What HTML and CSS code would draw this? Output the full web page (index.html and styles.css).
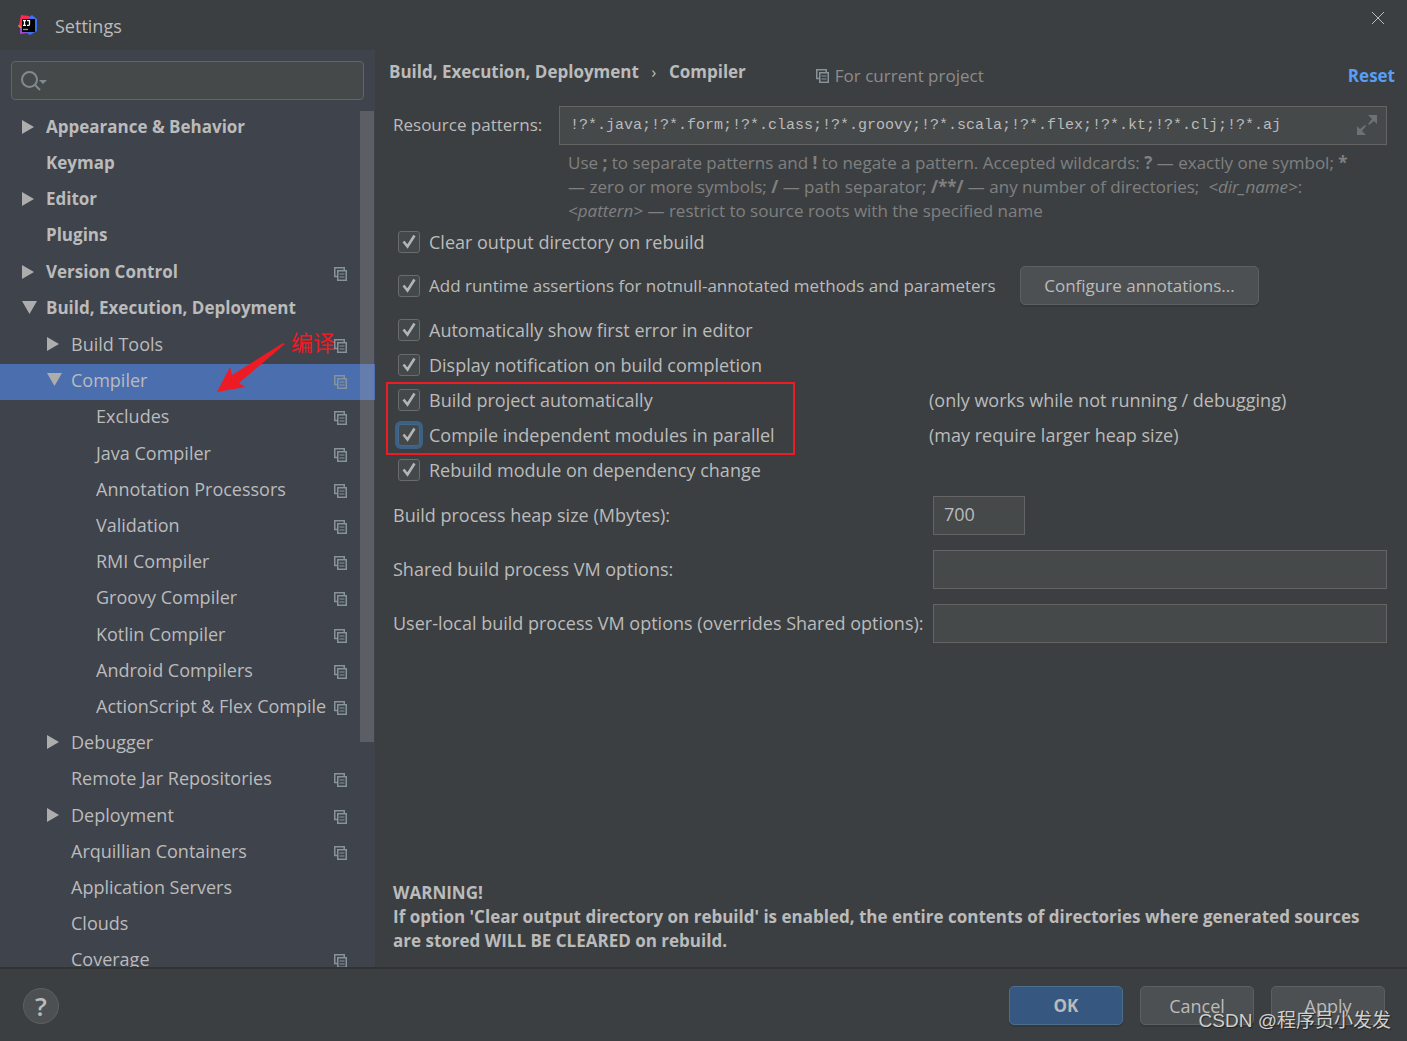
FILE: index.html
```html
<!DOCTYPE html>
<html lang="en">
<head>
<meta charset="utf-8">
<title>Settings</title>
<link rel="stylesheet" href="styles.css">
</head>
<body>
<svg class="sprite" aria-hidden="true">
  <symbol id="copy" viewBox="0 0 14 14"><path d="M3 9.500H.750V.750h9.500V3" stroke-width="1.500"/><rect x="3.750" y="3.750" width="8.500" height="9.500" stroke-width="1.500"/><path d="M5.500 7h5M5.500 10h5" stroke-width="1.200"/></symbol>
  <symbol id="right" viewBox="0 0 14 14"><path d="M1 0l12 7-12 7z"/></symbol>
  <symbol id="down" viewBox="0 0 16 14"><path d="M0 0h15L7.500 13z"/></symbol>
</svg>
<div class="window">
  <header class="titlebar">
    <svg class="logo" viewBox="0 0 20 20" aria-hidden="true">
      <path fill="#fc801d" d="M3 7L0 11l4 4z"/>
      <path fill="#fe2857" d="M3 0l8 1 2 3-7 9-5-3 1-5z"/>
      <path fill="#3b6ff5" d="M11 2l3-2 5 4v12l-7 4-5-3z"/>
      <path fill="#9b4bd6" d="M2 13l0 6 7-1 2-4z"/>
      <path fill="#000" d="M4 4h13v13H4z"/>
      <path fill="none" stroke="#fff" stroke-width="1.300" d="M5 5.700h3M6.500 5.500v5M5 10.300h3M9 5.700h2.500v3.500q0 1.200-1.200 1.200H9"/>
      <path fill="none" stroke="#999" stroke-width="1.300" d="M5 14.500h5"/>
    </svg>
    <h1 class="title">Settings</h1>
    <button class="close" type="button" aria-label="Close"><svg viewBox="0 0 14 14"><path d="M1 1l12 12M13 1L1 13"/></svg></button>
  </header>

  <div class="body">
    <nav class="sidebar" aria-label="Settings categories">
      <div class="search">
        <svg class="search-icon" viewBox="0 0 26 20" aria-hidden="true"><circle cx="8.500" cy="8.500" r="7.500"/><path d="M14 14l5 5"/><path class="fill" d="M18 9h8l-4 4z"/></svg>
        <input class="search-input" type="text" aria-label="Search settings">
      </div>
      <div class="tree-area">
        <ul class="tree">
          <li class="item top"><svg class="arrow"><use href="#right"/></svg><span class="name">Appearance &amp; Behavior</span></li>
          <li class="item top"><span class="name">Keymap</span></li>
          <li class="item top"><svg class="arrow"><use href="#right"/></svg><span class="name">Editor</span></li>
          <li class="item top"><span class="name">Plugins</span></li>
          <li class="item top"><svg class="arrow"><use href="#right"/></svg><span class="name">Version Control</span><svg class="copy"><use href="#copy"/></svg></li>
          <li class="item top"><svg class="arrow open"><use href="#down"/></svg><span class="name">Build, Execution, Deployment</span></li>
          <li class="item mid"><svg class="arrow"><use href="#right"/></svg><span class="name">Build Tools</span><svg class="copy"><use href="#copy"/></svg></li>
          <li class="item mid selected"><svg class="arrow open"><use href="#down"/></svg><span class="name">Compiler</span><svg class="copy"><use href="#copy"/></svg>
            <span class="note">编译</span>
            <svg class="pointer" viewBox="0 0 68 50" aria-hidden="true"><path d="M66 0L68 1L22 40L28 44L0 49L13 24L15 32Z"/></svg>
          </li>
          <li class="item leaf"><span class="name">Excludes</span><svg class="copy"><use href="#copy"/></svg></li>
          <li class="item leaf"><span class="name">Java Compiler</span><svg class="copy"><use href="#copy"/></svg></li>
          <li class="item leaf"><span class="name">Annotation Processors</span><svg class="copy"><use href="#copy"/></svg></li>
          <li class="item leaf"><span class="name">Validation</span><svg class="copy"><use href="#copy"/></svg></li>
          <li class="item leaf"><span class="name">RMI Compiler</span><svg class="copy"><use href="#copy"/></svg></li>
          <li class="item leaf"><span class="name">Groovy Compiler</span><svg class="copy"><use href="#copy"/></svg></li>
          <li class="item leaf"><span class="name">Kotlin Compiler</span><svg class="copy"><use href="#copy"/></svg></li>
          <li class="item leaf"><span class="name">Android Compilers</span><svg class="copy"><use href="#copy"/></svg></li>
          <li class="item leaf"><span class="name">ActionScript &amp; Flex Compile</span><svg class="copy"><use href="#copy"/></svg></li>
          <li class="item mid"><svg class="arrow"><use href="#right"/></svg><span class="name">Debugger</span></li>
          <li class="item mid"><span class="name">Remote Jar Repositories</span><svg class="copy"><use href="#copy"/></svg></li>
          <li class="item mid"><svg class="arrow"><use href="#right"/></svg><span class="name">Deployment</span><svg class="copy"><use href="#copy"/></svg></li>
          <li class="item mid"><span class="name">Arquillian Containers</span><svg class="copy"><use href="#copy"/></svg></li>
          <li class="item mid"><span class="name">Application Servers</span></li>
          <li class="item mid"><span class="name">Clouds</span></li>
          <li class="item mid"><span class="name">Coverage</span><svg class="copy"><use href="#copy"/></svg></li>
        </ul>
        <div class="scrollbar"></div>
      </div>
    </nav>

    <main class="main">
      <div class="heading">
        <h2 class="crumbs"><span>Build, Execution, Deployment</span><span class="sep">›</span><span>Compiler</span></h2>
        <p class="scope"><svg class="copy"><use href="#copy"/></svg>For current project</p>
        <a class="reset" href="#">Reset</a>
      </div>

      <div class="patterns">
        <label class="patterns-label" for="patterns">Resource patterns:</label>
        <div class="pattern-box">
          <input class="field mono" id="patterns" type="text" value="!?*.java;!?*.form;!?*.class;!?*.groovy;!?*.scala;!?*.flex;!?*.kt;!?*.clj;!?*.aj">
          <svg class="expand" viewBox="0 0 20 20" aria-hidden="true"><path d="M11 0h9v9l-3-3-5 4-1-1 4-5zM0 11l3 3 5-4 1 1-4 5 4 4H0z"/></svg>
        </div>
        <p class="hint">Use <b>;</b> to separate patterns and <b>!</b> to negate a pattern. Accepted wildcards: <b>?</b> — exactly one symbol; <b>*</b><br>— zero or more symbols; <b>/</b> — path separator; <b>/**/</b> — any number of directories; &nbsp;<i>&lt;dir_name&gt;</i>:<br><i>&lt;pattern&gt;</i> — restrict to source roots with the specified name</p>
      </div>

      <div class="options">
        <div class="option"><label><input type="checkbox" checked>Clear output directory on rebuild</label></div>
        <div class="option tall"><label><input type="checkbox" checked>Add runtime assertions for notnull-annotated methods and parameters</label><button class="button wide" type="button">Configure annotations...</button></div>
        <div class="option"><label><input type="checkbox" checked>Automatically show first error in editor</label></div>
        <div class="option"><label><input type="checkbox" checked>Display notification on build completion</label></div>
        <div class="marked">
          <div class="option"><label><input type="checkbox" checked>Build project automatically</label><span>(only works while not running / debugging)</span></div>
          <div class="option"><label><input class="focused" type="checkbox" checked>Compile independent modules in parallel</label><span>(may require larger heap size)</span></div>
        </div>
        <div class="option"><label><input type="checkbox" checked>Rebuild module on dependency change</label></div>
      </div>

      <div class="fields">
        <label for="heap">Build process heap size (Mbytes):</label>
        <input class="field short" id="heap" type="text" value="700">
        <label for="shared">Shared build process VM options:</label>
        <input class="field" id="shared" type="text">
        <label for="local">User-local build process VM options (overrides Shared options):</label>
        <input class="field" id="local" type="text">
      </div>

      <p class="warning">WARNING!<br>If option 'Clear output directory on rebuild' is enabled, the entire contents of directories where generated sources are stored WILL BE CLEARED on rebuild.</p>
    </main>
  </div>

  <footer class="footer">
    <button class="help" type="button" aria-label="Help">?</button>
    <button class="button primary" type="button">OK</button>
    <button class="button" type="button">Cancel</button>
    <button class="button" type="button">Apply</button>
    <span class="watermark">CSDN @程序员小发发</span>
  </footer>
</div>
</body>
</html>
```
FILE: styles.css
```css
*, *::after { box-sizing: border-box; }

body {
  margin: 0;
  background: #3c3f41;
  color: #bbbbbb;
  font: 18px/24px "Open Sans", "Noto Sans CJK SC", sans-serif;
}

h1, h2, p, ul { margin: 0; padding: 0; font-size: inherit; }
input, button { font: inherit; color: inherit; margin: 0; }
.sprite { position: absolute; width: 0; height: 0; }

.window {
  display: grid;
  grid-template-rows: 50px minmax(0, 1fr) auto;
  height: 100vh;
}

/* Title bar */
.titlebar { display: flex; align-items: center; padding: 0 22px 0 18px; }
.logo { width: 20px; height: 20px; }
.title { flex: 1; margin-left: 17px; padding-top: 2px; font-weight: 400; }
.close { align-self: flex-start; padding: 0; margin-top: 11px; border: 0; background: none; line-height: 0; }
.close svg { width: 14px; height: 14px; fill: none; stroke: #bbbbbb; }

.body { display: grid; grid-template-columns: 375px minmax(0, 1fr); }

/* Sidebar */
.sidebar {
  display: flex;
  flex-direction: column;
  min-height: 0;
  background: #3f434c;
}
.search {
  display: flex;
  align-items: center;
  height: 39px;
  margin: 11px;
  padding: 0 9px;
  border: 1px solid #646464;
  border-radius: 4px;
  background: #45494a;
}
.search-icon { width: 26px; height: 20px; fill: none; stroke: #7f8b91; stroke-width: 2; }
.search-icon .fill { fill: #7f8b91; stroke: none; }
.search-input { flex: 1; min-width: 0; border: 0; outline: 0; background: none; }

.tree-area { position: relative; flex: 1; min-height: 0; overflow: hidden; }
.tree { list-style: none; }
.item { position: relative; display: flex; align-items: center; height: 36px; padding-right: 27px; padding-bottom: 4px; }
.item:nth-child(5n) { margin-top: 1px; }
.top { padding-left: 46px; font-size: 17px; font-weight: 700; }
.mid { padding-left: 71px; }
.leaf { padding-left: 96px; }
.name { white-space: nowrap; }
.arrow { width: 14px; height: 14px; margin: 0 11px 0 -25px; fill: #adadad; }
.arrow.open { width: 16px; margin: 0 8px 0 -24px; }
.copy { flex: none; width: 14px; height: 14px; fill: none; stroke: #87939a; }
.item .copy { margin-top: 3px; margin-left: auto; }
.selected { background: #4b6eaf; }
.scrollbar { position: absolute; top: 0; right: 1px; width: 14px; height: 631px; background: rgba(166, 166, 166, 0.28); }

/* Hand-made annotation over the tree */
.note { position: absolute; left: 291px; top: -35px; color: #ed1c24; font: 22px/24px "Noto Sans CJK SC", sans-serif; z-index: 1; }
.pointer { position: absolute; left: 217px; top: -21px; width: 68px; height: 50px; fill: #ed1c24; z-index: 1; }

/* Main pane */
.main { display: flex; flex-direction: column; padding: 10px 20px 14px 18px; }
.heading { display: flex; align-items: flex-start; height: 46px; margin: 0 -8px 0 -4px; font-size: 17px; }
.crumbs { display: flex; font-weight: 700; }
.sep { width: 30px; text-align: center; font-weight: 400; }
.scope { display: flex; align-items: center; gap: 5px; margin-left: 70px; padding-top: 4px; color: #8c8c8c; }
.reset { margin-left: auto; padding-top: 4px; color: #589df6; font-weight: 700; text-decoration: none; }

.patterns { display: grid; grid-template-columns: 166px minmax(0, 1fr); align-items: center; }
.patterns-label { padding-bottom: 2px; font-size: 17px; }
.pattern-box { display: flex; position: relative; }
.field {
  width: 100%;
  height: 39px;
  padding: 0 10px;
  border: 1px solid #646464;
  border-radius: 0;
  outline: 0;
  background: #45494a;
}
.mono { padding-right: 50px; font-family: "Liberation Mono", monospace; font-size: 15px; }
.expand { position: absolute; right: 10px; top: 9px; width: 20px; height: 20px; fill: #6b7175; }
.hint { grid-column: 2; padding: 6px 0 1px 9px; color: #808080; font-size: 17px; white-space: nowrap; }

.option { display: flex; align-items: center; height: 35px; }
.option label { display: flex; align-items: center; white-space: nowrap; }
.option span { white-space: nowrap; }
.tall { height: 53px; justify-content: flex-start; }
.tall label { width: 627px; font-size: 17px; }
.option input {
  appearance: none;
  width: 22px;
  height: 22px;
  margin: 0 9px 0 5px;
  border: 1px solid #6b6b6b;
  border-radius: 3px;
  background: #43494a url("data:image/svg+xml,%3Csvg xmlns='http://www.w3.org/2000/svg' viewBox='0 0 20 20'%3E%3Cpath d='M4.500 9.500l4 5 7-11' fill='none' stroke='%23b4b4b4' stroke-width='2.600'/%3E%3C/svg%3E") center / 20px 20px;
}
.option .focused { border-color: #43698e; box-shadow: 0 0 0 3px #3d6185; outline: 0; }
.marked { position: relative; }
.marked::after {
  content: "";
  position: absolute;
  left: -7px;
  top: 0;
  width: 409px;
  height: 73px;
  border: 2px solid #ed1c24;
  pointer-events: none;
}
.marked .option { display: grid; grid-template-columns: 536px 1fr; }

.fields { display: grid; grid-template-columns: 540px minmax(0, 1fr); row-gap: 15px; align-items: center; margin-top: 9px; }
.fields label { padding-bottom: 2px; }
.short { width: 92px; }
.short { padding-bottom: 3px; }
.warning { margin-top: auto; font-size: 17px; font-weight: 700; }

/* Footer */
.footer {
  position: relative;
  display: flex;
  align-items: center;
  gap: 17px;
  padding: 17px 22px 16px 23px;
  border-top: 2px solid #323232;
}
.button {
  width: 114px;
  height: 39px;
  padding: 0;
  border: 1px solid #5e6060;
  border-radius: 5px;
  background: #4c5052;
  box-shadow: 0 2px 1px rgba(0, 0, 0, 0.12);
}
.wide { width: 239px; font-size: 17px; }
.primary { border-color: #4c708c; background: #365880; font-size: 17px; font-weight: 700; }
.help {
  width: 36px;
  height: 36px;
  margin-right: auto;
  padding: 0;
  border: 1px solid #5e6060;
  border-radius: 50%;
  background: #4c5052;
  font-size: 26px;
  font-weight: 600;
}
.watermark {
  position: absolute;
  right: 16px;
  bottom: 8px;
  color: #d0d0d0;
  font: 19px/24px "Liberation Sans", "Noto Sans CJK SC", sans-serif;
  text-shadow: 1px 1px 1px #222222;
  white-space: nowrap;
}
```
